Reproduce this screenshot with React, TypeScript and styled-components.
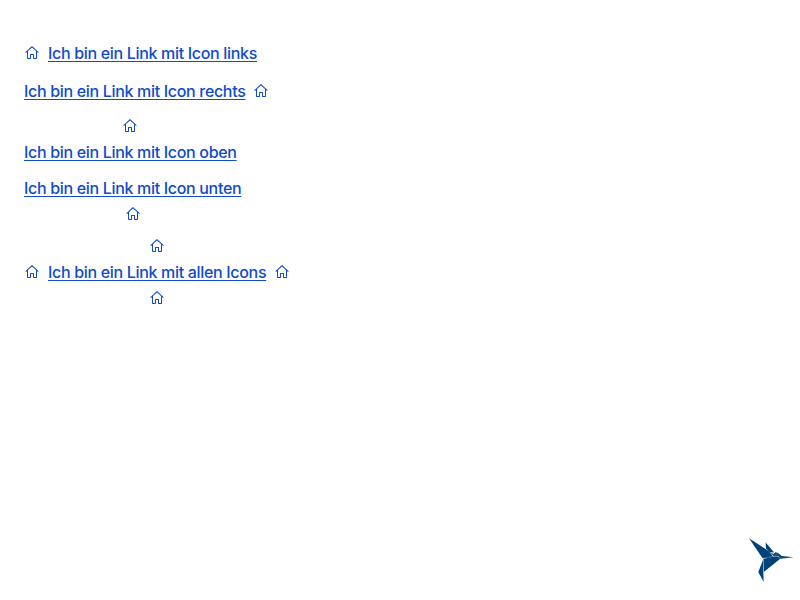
import React from 'react';
import styled, { createGlobalStyle } from 'styled-components';

const GlobalStyle = createGlobalStyle`
  html, body, #root { height: 100%; }
  body { margin: 0; background: #fff; overflow: hidden; }
`;

const Page = styled.main`
  box-sizing: border-box;
  height: 100%;
  padding: 40px 24px 0;
  display: flex;
  flex-direction: column;
  align-items: flex-start;
`;

const IconLink = styled.a<{ $gap: number }>`
  display: flex;
  flex-direction: column;
  align-items: center;
  margin-bottom: ${(p) => p.$gap}px;
  color: #0f4bcb;
  text-decoration: none;
  font: 500 16px/26px Inter, sans-serif;
  letter-spacing: -0.32px;
`;

const LinkRow = styled.span`
  display: flex;
  align-items: center;
  gap: 8px;
  height: 26px;
`;

const Label = styled.span`
  text-decoration: underline;
  text-decoration-thickness: 1px;
  text-underline-offset: 2px;
  white-space: nowrap;
`;

const IconSlot = styled.span`
  display: flex;
  align-items: center;
  height: 26px;
`;

const Logo = styled.svg`
  position: fixed;
  right: 6px;
  bottom: 17px;
  width: 45px;
  height: 45px;
`;

const Home = () => (
  <IconSlot>
    <svg width="16" height="16" viewBox="0 0 16 16" fill="currentColor" aria-hidden="true">
      <path
        fillRule="evenodd"
        clipRule="evenodd"
        d="M8.36 1.37l6.36 5.8-.71.71L13 6.964v6.526l-.5.5h-3l-.5-.5v-3.5H7v3.5l-.5.5h-3l-.5-.5V6.972L2 7.88l-.71-.71 6.35-5.8h.72zM4 6.063v6.927h2v-3.5l.5-.5h3l.5.5v3.5h2V6.057L8 2.43 4 6.063z"
      />
    </svg>
  </IconSlot>
);

type Side = 'left' | 'right' | 'top' | 'bottom';

const links: { label: string; icons: Side[]; gap: number }[] = [
  { label: 'Ich bin ein Link mit Icon links', icons: ['left'], gap: 12 },
  { label: 'Ich bin ein Link mit Icon rechts', icons: ['right'], gap: 9 },
  { label: 'Ich bin ein Link mit Icon oben', icons: ['top'], gap: 10 },
  { label: 'Ich bin ein Link mit Icon unten', icons: ['bottom'], gap: 6 },
  { label: 'Ich bin ein Link mit allen Icons', icons: ['left', 'right', 'top', 'bottom'], gap: 0 },
];

export default function App() {
  return (
    <>
      <GlobalStyle />
      <Page>
        {links.map(({ label, icons, gap }) => (
          <IconLink key={label} href="#" $gap={gap}>
            {icons.includes('top') && <Home />}
            <LinkRow>
              {icons.includes('left') && <Home />}
              <Label>{label}</Label>
              {icons.includes('right') && <Home />}
            </LinkRow>
            {icons.includes('bottom') && <Home />}
          </IconLink>
        ))}
      </Page>
      <Logo viewBox="0 0 45 45" fill="#004378" aria-label="Logo">
        <path d="M0 0.3L20 13.2L24 18.5L19.5 20.2L13.6 20.2Z" />
        <path d="M16.6 4.5L25.2 14.5L20.3 14L17 10.2Z" />
        <path d="M14.4 21L24.5 18.6L29.5 18.5L31.2 20.8L26 25L14.8 34Z" />
        <path d="M20 13.2L24.3 16L26.5 14.3L29.2 15L32.6 18.1L44.6 19.3L31.3 20.8L29.5 18L25 18.6Z" />
        <path d="M14 22L14.6 44L9.3 34Z" />
        <path d="M13.6 20.3L24.8 18.3L29.8 18.2M20.6 13.8L24.8 18.3L29.3 15" fill="none" stroke="#8fa9c0" strokeWidth="0.4" />
      </Logo>
    </>
  );
}
